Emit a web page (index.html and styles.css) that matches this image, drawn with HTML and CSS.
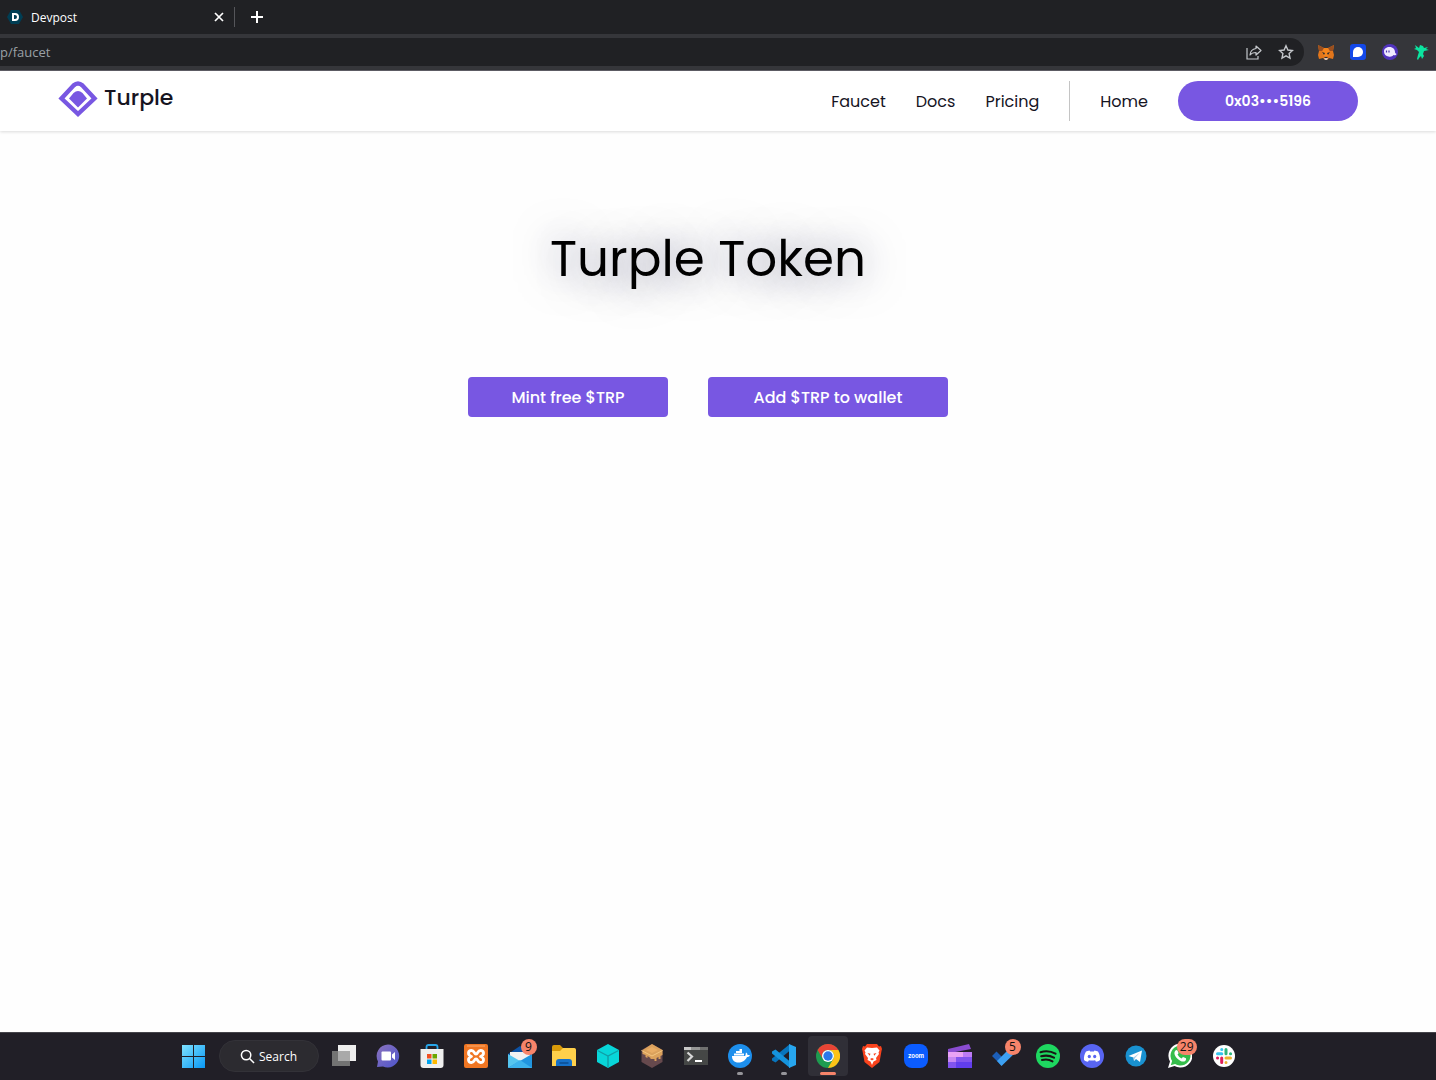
FILE: index.html
```html
<!DOCTYPE html>
<html lang="en">

<head>
  <meta charset="UTF-8" />
  <meta name="viewport" content="width=device-width, initial-scale=1.0" />
  <title>Turple • Faucet</title>
  <link rel="stylesheet" href="styles.css">
</head>

<body>

  <!-- Browser tabs -->
  <div class="tab-strip">
    <div class="tab">
      <svg class="tab-favicon" viewBox="0 0 16 16">
        <path d="M4 1h8l4 7-4 7H4L0 8z" fill="#003e54" />
        <path d="M5 4h3q4 0 4 4t-4 4H5zM7 6v4h1q2 0 2-2t-2-2z" fill="#fff" fill-rule="evenodd" />
      </svg>
      <span class="tab-title">Devpost</span>
      <button class="tab-button" aria-label="Close tab">
        <svg viewBox="0 0 16 16"><path d="M4 4l8 8M12 4l-8 8" stroke="#fff" stroke-width="1.7" /></svg>
      </button>
    </div>
    <button class="tab-button" aria-label="New tab">
      <svg viewBox="0 0 16 16"><path d="M8 2v12M2 8h12" stroke="#fff" stroke-width="2" /></svg>
    </button>
  </div>

  <!-- Address bar -->
  <div class="toolbar">
    <div class="address">
      <input type="text" value="p/faucet" aria-label="Address">
      <button class="tool" aria-label="Share">
        <svg viewBox="0 0 16 16" fill="none" stroke="#c4c7cb" stroke-width="1.2">
          <path d="M1 4v11h11v-3" />
          <path d="M10 2l5 4.500-5 4.500V8.500c-3 0-4.500.5-6 2.500.3-3.500 2.500-6 6-6.500z" stroke-linejoin="round" />
        </svg>
      </button>
      <button class="tool" aria-label="Bookmark">
        <svg viewBox="0 0 16 16" fill="none" stroke="#c4c7cb" stroke-width="1.4">
          <path d="M8 1.800l1.900 4.200 4.600.5-3.400 3.100.9 4.500-4-2.300-4 2.300.9-4.500-3.400-3.100 4.600-.5z" />
        </svg>
      </button>
    </div>
    <button class="tool" aria-label="MetaMask">
      <svg viewBox="0 0 16 16">
        <path d="M0 1l6 3h4l6-3-1 6 1 4-1 4-4-1-2 2H7l-2-2-4 1-1-4 1-4z" fill="#e2761b" />
        <path d="M0 1l6 3-2 3-3 0zM16 1l-6 3 2 3 3 0z" fill="#9a4f1f" />
        <path d="M6 4h4l2 5-2 3H6L4 9z" fill="#f6851b" />
        <path d="M4 8l3 1-1 2zM12 8l-3 1 1 2zM6 13h4l-1 1H7z" fill="#2a2a30" />
        <path d="M6 14h4l-1 2H7z" fill="#d7c1b3" />
      </svg>
    </button>
    <button class="tool" aria-label="Signal wallet">
      <svg viewBox="0 0 16 16">
        <rect width="16" height="16" rx="3" fill="#1348e8" />
        <path d="M3 13V8a5 5 0 1 1 5 5z" fill="#fff" />
      </svg>
    </button>
    <button class="tool" aria-label="Phantom">
      <svg viewBox="0 0 16 16">
        <circle cx="8" cy="8" r="8" fill="#5133bd" />
        <path d="M2 7.500C2 4.500 4.500 3 7.500 3c3.500 0 5.500 2.500 5.500 5 0 1 .5 1.500 1.500 2-.5 1.500-2 1.500-3 1-1 1.500-3 2-5 1.500C4 12 2 10.500 2 7.500z" fill="#f0eaff" />
        <path d="M4.500 6.500v2M7 6.500v2" stroke="#4b32ae" stroke-width="1.2" />
      </svg>
    </button>
    <button class="tool" aria-label="Wallet">
      <svg viewBox="0 0 16 16">
        <path d="M1 1l4 3 1-3 3 1 1 2 4-1-2 2 3 1-5 1-1 3 1 2-2 3-1-3-2 2-1 2-1-1 1-4 1-3-2-2-3-1 2-1z" fill="#0be5a0" />
      </svg>
    </button>
  </div>

  <!-- Site header -->
  <header class="header">
    <a href="#" class="brand">
      <svg class="brand-logo" viewBox="0 0 40 38">
        <path d="M15.500 5.500Q20 1.500 24.500 5.500L36.500 18.500 20 34 3.500 18.500z" fill="none" stroke="#7857e2" stroke-width="4.400" stroke-linejoin="miter" />
        <path d="M11 18.500l4.500-5.500q4.500-4 9 0l4.500 5.500-9 9z" fill="#7857e2" />
      </svg>
      <span>Turple</span>
    </a>
    <nav class="nav">
      <a href="#">Faucet</a>
      <a href="#">Docs</a>
      <a href="#">Pricing</a>
      <span class="divider"></span>
      <a href="#">Home</a>
      <button class="account">0x03•••5196</button>
    </nav>
  </header>

  <main class="faucet">
    <h1>Turple Token</h1>
    <div class="actions">
      <button class="action">Mint free $TRP</button>
      <button class="action wide">Add $TRP to wallet</button>
    </div>
  </main>

  <!-- Taskbar -->
  <footer class="taskbar">
    <button class="app" aria-label="Start">
      <svg viewBox="0 0 24 24">
        <defs>
          <linearGradient id="win" x1="0" y1="0" x2="24" y2="24" gradientUnits="userSpaceOnUse">
            <stop stop-color="#83e5ff" />
            <stop offset="1" stop-color="#0897f5" />
          </linearGradient>
        </defs>
        <path d="M1 1h11v11H1zM13 1h11v11H13zM1 13h11v11H1zM13 13h11v11H13z" fill="url(#win)" />
      </svg>
    </button>
    <button class="search">
      <svg viewBox="0 0 16 16" fill="none" stroke="#fff" stroke-width="1.6">
        <circle cx="6.500" cy="6.500" r="5" />
        <path d="M10.200 10.200l4.800 4.800" />
      </svg>
      Search
    </button>
    <button class="app" aria-label="Task view">
      <svg viewBox="0 0 24 24">
        <path d="M6 1h18v16H6z" fill="#eee" />
        <path d="M0 7h18v15H0z" fill="#737373" />
        <path d="M6 7h12v10H6z" fill="#a9a9a9" />
      </svg>
    </button>
    <button class="app" aria-label="Chat">
      <svg viewBox="0 0 24 24">
        <defs>
          <linearGradient id="chat" x1="0" y1="0" x2="1" y2="1">
            <stop stop-color="#8b72bd" />
            <stop offset="1" stop-color="#4d55cc" />
          </linearGradient>
        </defs>
        <path d="M12 .5a11.500 11.500 0 1 1-5 22l-6 .5 1-5.500A11.500 11.500 0 0 1 12 .5z" fill="url(#chat)" />
        <rect x="5.500" y="7.500" width="9.500" height="9" rx="1" fill="#fff" />
        <path d="M16 10.500l3-2.500v8l-3-2.500z" fill="#fff" />
      </svg>
    </button>
    <button class="app" aria-label="Microsoft Store">
      <svg viewBox="0 0 24 24">
        <path d="M6.500 6V3q0-2 2-2h7q2 0 2 2v3" fill="none" stroke="#27a5e8" stroke-width="1.800" />
        <path d="M.5 5h23v16q0 3-3 3h-17q-3 0-3-3z" fill="#efefef" />
        <path d="M7 10h4.500v4.500H7z" fill="#f25022" />
        <path d="M12.500 10H17v4.500h-4.500z" fill="#6ba700" />
        <path d="M7 15.500h4.500V20H7z" fill="#00a4ef" />
        <path d="M12.500 15.500H17V20h-4.500z" fill="#ffb900" />
      </svg>
    </button>
    <button class="app" aria-label="XAMPP">
      <svg viewBox="0 0 24 24">
        <rect width="24" height="24" rx="2" fill="#f07623" />
        <path d="M3 2h18" stroke="#f9ac72" />
        <path d="M7.500 12.500C3 11 4 6.500 7.500 6.500c3 0 2.500 3.500 4.500 3.500s1.500-3.500 4.500-3.500c3.500 0 4.500 4.500 0 6 4.500 1.500 3.500 6 0 6-3 0-2.500-3.500-4.500-3.500s-1.500 3.500-4.500 3.500c-3.500 0-4.500-4.500 0-6z" fill="none" stroke="#fff" stroke-width="2.800" stroke-linejoin="round" />
      </svg>
    </button>
    <button class="app" aria-label="Mail">
      <svg viewBox="0 0 24 24">
        <path d="M0 10L12 2l12 8v14H0z" fill="#0d52a5" />
        <path d="M2 8h20v7l-10 3-10-5z" fill="#f1f1f1" />
        <path d="M24 10v14H0z" fill="#2195df" />
        <path d="M0 10l12 7L0 24z" fill="#55c5ef" />
        <path d="M0 24l12-8 12 8z" fill="#3cb2ec" />
      </svg>
      <span class="badge">9</span>
    </button>
    <button class="app" aria-label="File Explorer">
      <svg viewBox="0 0 24 24">
        <path d="M0 3q0-2 2-2h6l3 3h10q3 0 3 3v4H0z" fill="#d99a09" />
        <path d="M0 7h8l3-3h11q2 0 2 2v16H0z" fill="#ffd04b" />
        <path d="M4 22v-4q0-3 3-3h10q3 0 3 3v4z" fill="#1671c9" />
        <path d="M7.500 19h9" stroke="#0b4d91" stroke-width="1.500" />
      </svg>
    </button>
    <button class="app" aria-label="Hyper box">
      <svg viewBox="0 0 24 24">
        <path d="M12 0l11 6v12l-11 6-11-6V6z" fill="#08d6d9" />
        <path d="M1.500 6.500L12 12l10.500-5.500M12 12v11.500" fill="none" stroke="#119da6" stroke-width="1.400" />
      </svg>
    </button>
    <button class="app" aria-label="Ganache">
      <svg viewBox="0 0 24 24">
        <path d="M12 0l10.500 6v12L12 24 1.500 18V6z" fill="#66494d" />
        <path d="M12 0l10.500 6v5l-2 1v3l-2 0v-2l-2 1v3l-2 0v-2l-4 0v-1l-3-2v2l-2-1v-2l-3-1V6z" fill="#dba15c" />
        <path d="M1.500 6.500L12 12l10.500-5.500" fill="none" stroke="#f3c57f" />
        <path d="M6 6l6-3 6 3-6 3z" fill="#e9ad65" />
      </svg>
    </button>
    <button class="app" aria-label="Terminal">
      <svg viewBox="0 0 24 24">
        <path d="M0 3h24v18H0z" fill="#454746" />
        <path d="M0 3h7v3H0z" fill="#c8c8c8" />
        <path d="M7 3h9v3H7z" fill="#969696" />
        <path d="M16 3h8v3h-8z" fill="#707070" />
        <path d="M3.500 8.500l4.500 4-4.500 4.500" fill="none" stroke="#d8d8d8" stroke-width="2.200" />
        <path d="M11 17h7" stroke="#fff" stroke-width="2" />
      </svg>
    </button>
    <button class="app running" aria-label="Docker">
      <svg viewBox="0 0 24 24">
        <circle cx="12" cy="12" r="12" fill="#1d8fec" />
        <path d="M4 12h13c1-1 .5-2.500 1-3.500 1 .5 1.500 1.500 1.500 2.500 1 0 2 0 2.500.5-1 1.500-2 1.500-3 1.500-2 4-5 5.500-8.500 5.500C6 18.500 4 16 4 12z" fill="#fff" />
        <path d="M6 9.500h10v2H6zM8 7h6v2H8zM11.500 5H14v2h-2.500z" fill="#fff" />
      </svg>
    </button>
    <button class="app running" aria-label="Visual Studio Code">
      <svg viewBox="0 0 24 24">
        <path d="M18 0v6.500L3.500 18.500 0 16.500v-2z" fill="#0875bd" />
        <path d="M18 24v-6.500L3.500 5.500 0 7.500v2z" fill="#1593dd" />
        <path d="M17 0l7 3v18l-7 3z" fill="#27a6ef" />
      </svg>
    </button>
    <button class="app running active" aria-label="Google Chrome">
      <svg viewBox="0 0 24 24">
        <circle cx="12" cy="12" r="12" fill="#1e9b50" />
        <path d="M1.600 6A12 12 0 0 1 22.400 6H12a6 6 0 0 0-5.200 9z" fill="#e84435" />
        <path d="M22.400 6A12 12 0 0 1 12 24l5.200-9A6 6 0 0 0 12 6z" fill="#fbc318" />
        <circle cx="12" cy="12" r="6" fill="#fff" />
        <circle cx="12" cy="12" r="4.700" fill="#2879ea" />
      </svg>
    </button>
    <button class="app" aria-label="Brave">
      <svg viewBox="0 0 24 24">
        <path d="M7 0h10l2 2.500 2-.5 1 3-.5 2-2 11-7.500 6-7.500-6-2-11L2 5l1-3 2 .5z" fill="#f9431d" />
        <path d="M12 4l5-.5 2.500 3-1 2 .5 1.500-3 4 .5 2-3 1.500-1.500 3.500-1.500-3.500-3-1.500.5-2-3-4 .5-1.500-1-2 2.500-3z" fill="#fff" />
        <path d="M7.500 9l3 .8-.8 2zM16.500 9l-3 .8.8 2zM10 15l2-1 2 1-2 1.500z" fill="#f9431d" />
      </svg>
    </button>
    <button class="app" aria-label="Zoom">
      <svg viewBox="0 0 24 24">
        <rect width="24" height="24" rx="8" fill="#0b5cff" />
        <text x="12" y="14" class="zoom-word" text-anchor="middle">zoom</text>
      </svg>
    </button>
    <button class="app" aria-label="Clipchamp">
      <svg viewBox="0 0 24 24">
        <path d="M0 5l21-5 2 5L2 9H0z" fill="#8a4cd1" />
        <path d="M0 8h24v16H0z" fill="#8254ee" />
        <path d="M0 8h15v5H0z" fill="#e9a2f5" />
        <path d="M15 8h9v5h-9z" fill="#bd7bf5" />
        <path d="M0 13h8v5H0z" fill="#c787f3" />
        <path d="M8 18h16v6H8z" fill="#613ded" />
      </svg>
    </button>
    <button class="app" aria-label="To Do">
      <svg viewBox="0 0 24 24">
        <path d="M0 12l4.500-4.500L14 17l-4.500 4.500z" fill="#1c5eb8" />
        <path d="M5 17L19 3l5 5L9.500 22z" fill="#3da0f2" />
      </svg>
      <span class="badge">5</span>
    </button>
    <button class="app" aria-label="Spotify">
      <svg viewBox="0 0 24 24">
        <circle cx="12" cy="12" r="12" fill="#1ed760" />
        <path d="M4.500 8.200c5-1.500 10.500-1 15 1.500M5.200 12.300c4.500-1.300 8.800-.8 12.800 1.400M6 16c3.700-1 7.300-.6 10.500 1.300" fill="none" stroke="#191414" stroke-width="2.100" stroke-linecap="round" />
      </svg>
    </button>
    <button class="app" aria-label="Discord">
      <svg viewBox="0 0 24 24">
        <circle cx="12" cy="12" r="12" fill="#5865f2" />
        <path d="M9.500 6.500l.6 1h3.800l.6-1c1.300.2 2.400.5 3.500 1 1.500 2.500 2.300 5.300 2 8.500-1.200 1-2.500 1.500-4 1.800l-.9-1.600c-2 .5-4.200.5-6.200 0L8 17.800c-1.500-.3-2.800-.8-4-1.800-.3-3.200.5-6 2-8.500 1.100-.5 2.200-.8 3.500-1z" fill="#fff" />
        <ellipse cx="9.300" cy="12.500" rx="1.600" ry="1.800" fill="#5865f2" />
        <ellipse cx="14.700" cy="12.500" rx="1.600" ry="1.800" fill="#5865f2" />
      </svg>
    </button>
    <button class="app" aria-label="Telegram">
      <svg viewBox="0 0 24 24">
        <circle cx="12" cy="12" r="10.500" fill="#1991d0" />
        <path d="M4.500 12L18 6.500l-2 11.500-4-3-2 2-.5-3.500z" fill="#fff" />
        <path d="M9.500 13.500L16 8.500l-5 5.500-1 3z" fill="#a9cde8" />
      </svg>
    </button>
    <button class="app" aria-label="WhatsApp">
      <svg viewBox="0 0 24 24">
        <path d="M0 24l2-6.500A12 12 0 1 1 6.500 22z" fill="#fff" />
        <path d="M2.800 21.200l1.300-4.200a10 10 0 1 1 3 3z" fill="#35bd4b" />
        <path d="M7.500 6.500q1-1 2 0l1 2.500q0 .8-1 1.600 1.300 2.700 4 3.900l1.500-1.500 3 1.300q.5 1.700-.8 2.700c-1.500 1-3.200.6-5-.3-2.500-1.300-4.400-3.200-5.400-5.700-.6-1.700-.5-3.200.7-4.500z" fill="#fff" />
      </svg>
      <span class="badge">29</span>
    </button>
    <button class="app" aria-label="Slack">
      <svg viewBox="0 0 24 24" fill="none" stroke-width="3" stroke-linecap="round">
        <circle cx="12" cy="12" r="11" fill="#fff" />
        <path d="M9.700 5.500h.1M5.500 9.700h4.300" stroke="#36c5f0" />
        <path d="M14 5.500v4.200M18.500 9.700h.1" stroke="#2eb67d" />
        <path d="M14 14h4.500M14 18.400v.1" stroke="#ecb22e" />
        <path d="M9.700 14v4.500M5.500 14h.1" stroke="#e01e5a" />
      </svg>
    </button>
  </footer>

</body>
</html>
```
FILE: styles.css
```css
* {
  box-sizing: border-box;
}

body {
  margin: 0;
  min-height: 100vh;
  display: flex;
  flex-direction: column;
  background: #fefefe;
  font-family: Poppins, Inter, sans-serif;
}

button {
  border: none;
  padding: 0;
  background: none;
  font-family: inherit;
  cursor: pointer;
}

svg {
  display: block;
}

a {
  color: #16141f;
  text-decoration: none;
}

/* browser */
.tab-strip {
  display: flex;
  align-items: center;
  gap: 14px;
  height: 34px;
  background: #202124;
}

.tab {
  display: flex;
  align-items: center;
  width: 235px;
  height: 20px;
  padding: 0 7px;
  border-right: 1px solid #55565a;
}

.tab-favicon {
  width: 16px;
  height: 16px;
}

.tab-title {
  flex: 1;
  margin-left: 8px;
  color: #fff;
  font-family: "Open Sans", sans-serif;
  font-size: 12px;
}

.tab-button,
.tool,
.tab-button svg,
.tool svg {
  width: 16px;
  height: 16px;
}

.toolbar {
  display: flex;
  align-items: center;
  gap: 16px;
  height: 37px;
  padding-right: 6px;
  background: #35363a;
  border-bottom: 1px solid #5f5e66;
}

.address {
  flex: 1;
  display: flex;
  align-items: center;
  gap: 16px;
  height: 28px;
  margin-right: -2px;
  padding-right: 10px;
  background: #202124;
  border-radius: 0 14px 14px 0;
}

.address input {
  flex: 1;
  min-width: 0;
  padding: 0;
  border: none;
  background: none;
  color: #9aa0a6;
  font-family: "Open Sans", sans-serif;
  font-size: 13px;
}

/* header */
.header {
  display: flex;
  justify-content: space-between;
  align-items: center;
  height: 60px;
  padding: 0 78px 0 58px;
  background: white;
  box-shadow: 0 1px 3px rgba(0, 0, 0, 0.14);
}

.brand {
  display: flex;
  align-items: flex-start;
  gap: 6px;
  padding-bottom: 4px;
  font-size: 22px;
  font-weight: 500;
  line-height: 36px;
}

.brand-logo {
  width: 40px;
  height: 38px;
}

.nav {
  display: flex;
  align-items: center;
  gap: 30px;
  font-size: 16px;
}

.divider {
  width: 1px;
  height: 40px;
  background: #c4c4c4;
}

.account {
  width: 180px;
  height: 40px;
  border-radius: 20px;
  background: #7857e2;
  color: white;
  font-size: 14px;
  font-weight: 600;
}

/* faucet */
.faucet {
  flex: 1;
  display: flex;
  flex-direction: column;
  align-items: center;
  padding: 90px 20px 40px 0;
}

h1 {
  margin: 0;
  color: #000;
  font-size: 50px;
  font-weight: 400;
  line-height: 76px;
  text-shadow: 0 2px 40px rgba(22, 24, 70, 0.6);
}

.actions {
  display: flex;
  gap: 40px;
  margin-top: 80px;
}

.action {
  width: 200px;
  height: 40px;
  border-radius: 4px;
  background: #7857e2;
  color: white;
  font-size: 16px;
  font-weight: 500;
}

.action.wide {
  width: 240px;
}

/* taskbar */
.taskbar {
  display: flex;
  justify-content: center;
  align-items: center;
  gap: 4px;
  height: 48px;
  padding-right: 20px;
  background: #211f27;
  box-shadow: inset 0 1px #45444a;
}

.app {
  position: relative;
  display: flex;
  justify-content: center;
  align-items: center;
  width: 40px;
  height: 40px;
  border-radius: 4px;
}

.app svg {
  width: 24px;
  height: 24px;
}

.search {
  display: flex;
  justify-content: center;
  align-items: center;
  gap: 4px;
  width: 100px;
  height: 32px;
  margin: 0 1px 0 2px;
  border: 1px solid #333238;
  border-radius: 16px;
  background: #2c2b30;
  color: white;
  font-family: "Open Sans", sans-serif;
  font-size: 12px;
}

.search svg {
  width: 15px;
  height: 15px;
}

.badge {
  position: absolute;
  top: 3px;
  right: 3px;
  min-width: 16px;
  padding: 0 3px;
  border-radius: 8px;
  background: #f7846a;
  color: #111;
  font-family: "Open Sans", sans-serif;
  font-size: 12px;
  line-height: 16px;
  text-align: center;
}

.running::after {
  content: "";
  position: absolute;
  bottom: 1px;
  width: 6px;
  height: 3px;
  border-radius: 2px;
  background: #96959a;
}

.active {
  background: #302f37;
}

.active::after {
  width: 16px;
  background: #f7846a;
}

.zoom-word {
  fill: white;
  font-family: Inter, sans-serif;
  font-size: 6px;
  font-weight: 700;
}
```
